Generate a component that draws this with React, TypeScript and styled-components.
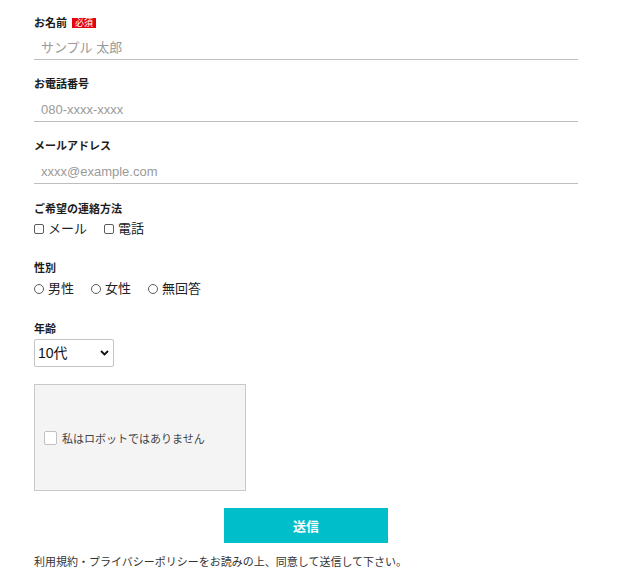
import styled, { createGlobalStyle } from "styled-components";

const GlobalStyle = createGlobalStyle`
  * { box-sizing: border-box; }
  body {
    margin: 0;
    background: #fff;
    font-family: "Liberation Sans", "Noto Sans CJK JP", sans-serif;
    color: #222;
  }
`;

const Form = styled.form`
  width: 578px;
  padding: 13px 0 0 34px;
  display: flex;
  flex-direction: column;
`;

const Field = styled.div<{ $after?: number }>`
  display: flex;
  flex-direction: column;
  margin-bottom: ${(p) => p.$after ?? 15}px;
`;

// $drop pushes the text down inside the same 18px line box
const Label = styled.div<{ $below?: number; $drop?: number }>`
  display: flex;
  align-items: center;
  gap: 5px;
  height: 18px;
  padding-top: ${(p) => (p.$drop ?? 0) * 2}px;
  font-size: 11px;
  font-weight: 700;
  line-height: ${(p) => 18 - (p.$drop ?? 0) * 2}px;
  color: #1c1c1c;
  margin-bottom: ${(p) => p.$below ?? 0}px;
`;

const Required = styled.span`
  display: inline-block;
  height: 10px;
  padding: 0 3px;
  background: #e60012;
  color: #fff;
  font-size: 9px;
  font-weight: 400;
  line-height: 10px;
`;

const TextInput = styled.input`
  height: 29px;
  border: none;
  border-bottom: 1px solid #bdbdbd;
  padding: 4px 7px 0;
  font-family: inherit;
  font-size: 13px;
  color: #222;
  outline: none;
  &::placeholder {
    color: #9a9a9a;
  }
`;

const Options = styled.div`
  display: flex;
  gap: 17px;
  font-size: 13px;
  line-height: 18px;
  color: #222;
`;

const Option = styled.label`
  display: flex;
  align-items: center;
  gap: 4px;
`;

const Box = styled.input<{ $round?: boolean }>`
  appearance: none;
  width: 10px;
  height: 10px;
  margin: 0;
  border: 1px solid #5c5c5c;
  border-radius: ${(p) => (p.$round ? "50%" : "2px")};
  background: #fff;
`;

const SelectWrap = styled.div`
  position: relative;
  width: 80px;
  height: 28px;
`;

const Select = styled.select`
  appearance: none;
  width: 100%;
  height: 100%;
  border: 1px solid #c4c4c4;
  border-radius: 2px;
  background: #fff;
  padding: 0 0 0 3px;
  font-family: inherit;
  font-size: 14px;
  color: #111;
`;

const Chevron = styled.svg`
  position: absolute;
  right: 5px;
  top: 11px;
  pointer-events: none;
`;

const Captcha = styled.div`
  width: 212px;
  height: 107px;
  margin: 17px 0 17px;
  padding: 0 9px;
  display: flex;
  align-items: center;
  gap: 5px;
  background: #f4f4f4;
  border: 1px solid #c9c9c9;
  font-size: 11px;
  color: #444;
`;

const CaptchaBox = styled.span`
  width: 13px;
  height: 14px;
  background: #fff;
  border: 1px solid #c1c1c1;
  border-radius: 2px;
`;

const Submit = styled.button`
  align-self: center;
  width: 164px;
  height: 35px;
  border: none;
  background: #00bfcb;
  color: #fff;
  font-family: inherit;
  font-size: 13px;
  font-weight: 700;
`;

const Note = styled.p`
  margin: 10px 0 0;
  font-size: 11px;
  line-height: 18px;
  color: #333;
`;

const App = () => {
  return (
    <>
      <GlobalStyle />
      <Form onSubmit={(e) => e.preventDefault()}>
        <Field>
          <Label $drop={1}>
            お名前<Required>必須</Required>
          </Label>
          <TextInput placeholder="サンプル 太郎" />
        </Field>
        <Field>
          <Label>お電話番号</Label>
          <TextInput placeholder="080-xxxx-xxxx" />
        </Field>
        <Field $after={16}>
          <Label>メールアドレス</Label>
          <TextInput placeholder="xxxx@example.com" />
        </Field>
        <Field $after={21}>
          <Label $below={2}>ご希望の連絡方法</Label>
          <Options>
            <Option>
              <Box type="checkbox" />
              メール
            </Option>
            <Option>
              <Box type="checkbox" />
              電話
            </Option>
          </Options>
        </Field>
        <Field $after={22}>
          <Label $below={3}>性別</Label>
          <Options>
            {["男性", "女性", "無回答"].map((g) => (
              <Option key={g}>
                <Box type="radio" name="gender" $round />
                {g}
              </Option>
            ))}
          </Options>
        </Field>
        <Field $after={0}>
          <Label $below={1}>年齢</Label>
          <SelectWrap>
            <Select defaultValue="10">
              <option value="10">10代</option>
              <option value="20">20代</option>
              <option value="30">30代</option>
            </Select>
            <Chevron width="9" height="6" viewBox="0 0 9 6">
              <polyline points="1,1 4.5,4.5 8,1" fill="none" stroke="#111" strokeWidth="1.8" />
            </Chevron>
          </SelectWrap>
        </Field>
        <Captcha>
          <CaptchaBox />
          私はロボットではありません
        </Captcha>
        <Submit type="submit">送信</Submit>
        <Note>利用規約・プライバシーポリシーをお読みの上、同意して送信して下さい。</Note>
      </Form>
    </>
  );
};

export default App;
